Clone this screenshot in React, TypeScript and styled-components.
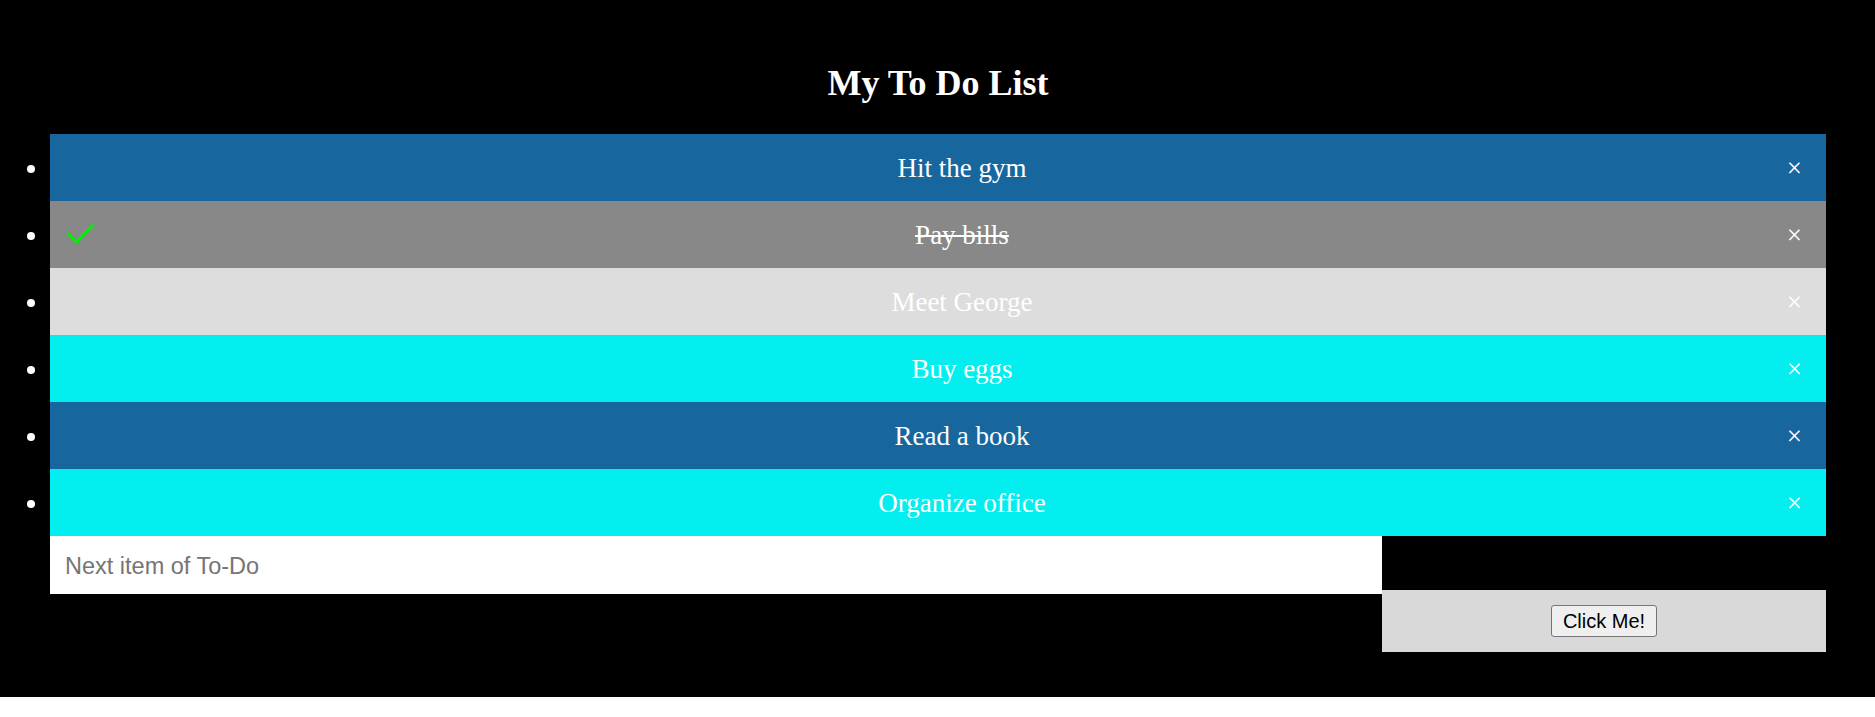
import React from "react";
import styled, { createGlobalStyle, css } from "styled-components";

const GlobalStyle = createGlobalStyle`
  html, body {
    margin: 0;
    padding: 0;
    background: #ffffff;
  }
  * { box-sizing: border-box; }
`;

const Page = styled.div`
  background: #000000;
  padding: 63px 49px 45px 50px;
  font-family: "Liberation Serif", "Times New Roman", serif;
`;

const Title = styled.h2`
  margin: 0 0 30px;
  font-size: 36px;
  line-height: 41px;
  font-weight: bold;
  color: #ffffff;
  text-align: center;
`;

const List = styled.ul`
  margin: 0;
  padding: 0;
  list-style: disc outside;
  color: #ffffff;
`;

type ItemProps = { $bg: string; $checked?: boolean };

const Item = styled.li<ItemProps>`
  position: relative;
  background: ${(p) => p.$bg};
  padding: 19px 12px 17px 60px;
  font-size: 27px;
  line-height: 31px;
  color: #ffffff;
  text-align: center;
  ${(p) =>
    p.$checked &&
    css`
      text-decoration: line-through;
      &::before {
        content: "";
        position: absolute;
        top: 16px;
        left: 24px;
        width: 10.5px;
        height: 22.5px;
        border-style: solid;
        border-color: #00f000;
        border-width: 0 3px 3px 0;
        transform: rotate(45deg);
      }
    `}
`;

const Close = styled.span`
  position: absolute;
  right: 0;
  top: 0;
  padding: 19px 24px 17px;
  color: #ffffff;
`;

const AddRow = styled.div`
  display: flex;
  align-items: flex-start;
`;

const Input = styled.input`
  width: 75%;
  height: 58px;
  margin: 0;
  border: none;
  border-radius: 0;
  padding: 2px 15px 0;
  font-family: "Liberation Sans", Arial, sans-serif;
  font-size: 23.5px;
  color: #000;
  background: #ffffff;
  outline: none;
  &::placeholder {
    color: #757575;
  }
`;

const AddArea = styled.div`
  width: 25%;
  margin-top: 54px;
  padding: 15px;
  background: #d9d9d9;
  display: flex;
  justify-content: center;
`;

const Button = styled.button`
  height: 32px;
  padding: 0 11px;
  font-family: "Liberation Sans", Arial, sans-serif;
  font-size: 20px;
  color: #000000;
  background: #efefef;
  border: 1px solid #767676;
  border-radius: 3px;
`;

const items = [
  { text: "Hit the gym", bg: "#17679e" },
  { text: "Pay bills", bg: "#888888", checked: true },
  { text: "Meet George", bg: "#dddddd" },
  { text: "Buy eggs", bg: "#03efef" },
  { text: "Read a book", bg: "#17679e" },
  { text: "Organize office", bg: "#03efef" },
];

export default function App() {
  return (
    <>
      <GlobalStyle />
      <Page>
        <Title>My To Do List</Title>
        <List>
          {items.map((it) => (
            <Item key={it.text} $bg={it.bg} $checked={it.checked}>
              {it.text}
              <Close>{"\u00D7"}</Close>
            </Item>
          ))}
        </List>
        <AddRow>
          <Input type="text" placeholder="Next item of To-Do" />
          <AddArea>
            <Button>Click Me!</Button>
          </AddArea>
        </AddRow>
      </Page>
    </>
  );
}
